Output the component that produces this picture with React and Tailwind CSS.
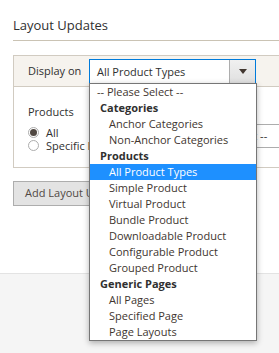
import React from "react";

const options = [
  { label: "-- Please Select --", type: "placeholder" },
  { label: "Categories", type: "group" },
  { label: "Anchor Categories" },
  { label: "Non-Anchor Categories" },
  { label: "Products", type: "group" },
  { label: "All Product Types", selected: true },
  { label: "Simple Product" },
  { label: "Virtual Product" },
  { label: "Bundle Product" },
  { label: "Downloadable Product" },
  { label: "Configurable Product" },
  { label: "Grouped Product" },
  { label: "Generic Pages", type: "group" },
  { label: "All Pages" },
  { label: "Specified Page" },
  { label: "Page Layouts" },
];

const App = () => {
  return (
    <div className="relative w-[279px] h-[353px] overflow-hidden bg-white font-['Open_Sans',sans-serif] text-[#303030]">
      {/* Page content */}
      <div className="pl-[13px] h-[273px]">
        <h2 className="pt-[16px] pb-[6px] text-[13px] leading-[18px] border-b border-[#cac3b4]">
          Layout Updates
        </h2>

        {/* Layout update fieldset */}
        <div className="mt-[14px] w-[320px] border-l border-t border-b border-[#d1cbc1]">
          <div className="flex items-center h-[31px] bg-[#f6f3ee] border-b border-[#d1cbc1]">
            <span className="w-[75px] pl-[14px] text-[11px]">Display on</span>
            <div className="flex h-[25px] w-[167px] border border-[#007bdb] bg-white">
              <span className="flex-1 pl-[7px] text-[11px] leading-[23px]">All Product Types</span>
              <div className="flex w-[26px] items-center justify-center border-l border-[#adadad] bg-gradient-to-b from-[#f0f0f0] to-[#e0e0e0]">
                <span className="block w-0 h-0 border-l-[4px] border-r-[4px] border-t-[5px] border-l-transparent border-r-transparent border-t-[#41362f]" />
              </div>
            </div>
          </div>

          <div className="flex h-[80px]">
            <div className="pl-[14px] pt-[17px] w-[159px] shrink-0 whitespace-nowrap">
              <div className="text-[11px] leading-[16px]">Products</div>
              <div className="mt-[6px] flex items-center gap-[7px] h-[13px]">
                <span className="flex items-center justify-center w-[11px] h-[11px] rounded-full border border-[#adadad] bg-white">
                  <span className="block w-[7px] h-[7px] rounded-full bg-[#514943]" />
                </span>
                <span className="text-[11px] leading-[13px]">All</span>
              </div>
              <div className="flex items-center gap-[7px] h-[13px]">
                <span className="w-[11px] h-[11px] rounded-full border border-[#adadad] bg-white" />
                <span className="text-[11px] leading-[13px]">Specific Products</span>
              </div>
            </div>
            <div className="mt-[37px] h-[24px] w-[140px] shrink-0 border border-[#adadad] pl-[7px] text-[11px] leading-[22px] whitespace-nowrap">
              -- Please Select --
            </div>
          </div>
        </div>

        <button className="mt-[13px] h-[25px] px-[11px] border border-[#adadad] bg-[#e3e3e3] text-[11px] text-[#514943] whitespace-nowrap">
          Add Layout Update
        </button>
      </div>

      {/* Footer */}
      <div className="h-[80px] border-t border-[#e3e3e3] bg-[#f5f5f5]" />

      {/* Open dropdown list */}
      <ul className="absolute left-[89px] top-[83px] w-[168px] border border-[#767676] bg-white shadow-[0_2px_6px_rgba(0,0,0,0.3)] text-[11px] leading-[16px] text-[#41362f]">
        {options.map((opt) => (
          <li
            key={opt.label}
            className={
              opt.type === "group"
                ? "h-[16px] pl-[10px] font-bold text-[#303030]"
                : opt.type === "placeholder"
                ? "h-[16px] pl-[7px]"
                : opt.selected
                ? "h-[16px] pl-[19px] bg-[#1e90ff] text-white"
                : "h-[16px] pl-[19px]"
            }
          >
            {opt.label}
          </li>
        ))}
      </ul>
    </div>
  );
};

export default App;
